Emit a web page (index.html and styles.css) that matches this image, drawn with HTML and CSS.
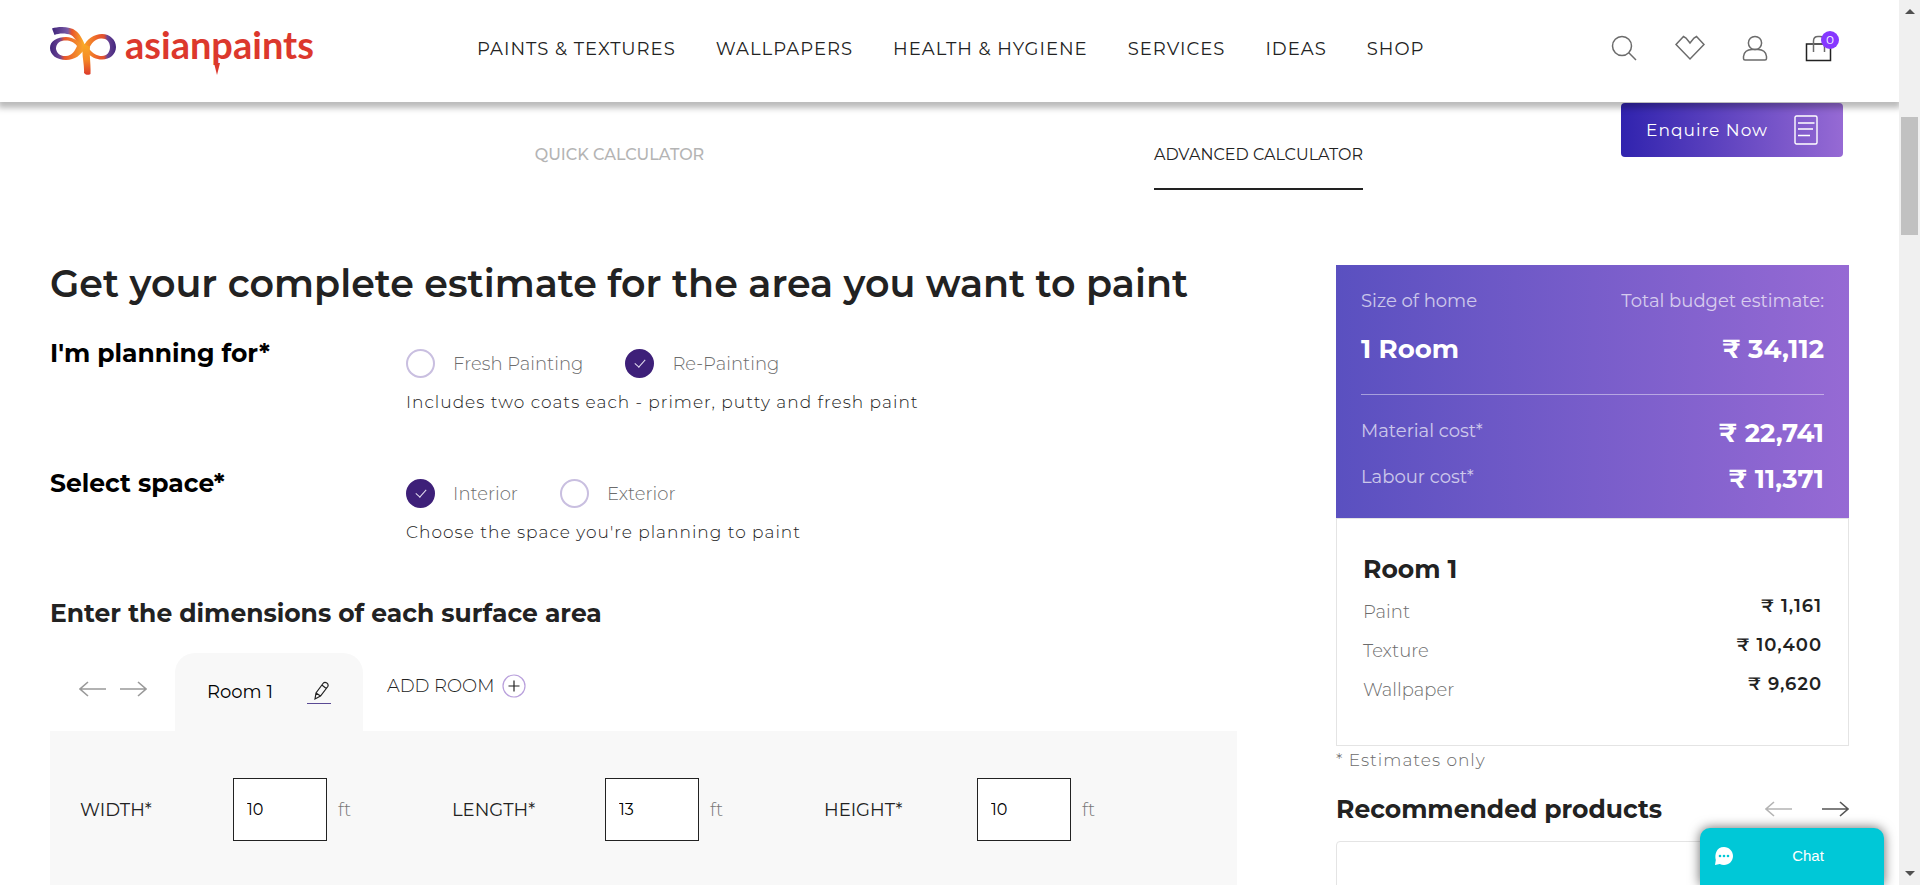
FILE: index.html
```
<!DOCTYPE html>
<html lang="en">
<head>
<meta charset="utf-8">
<title>Paint Budget Calculator - Asian Paints</title>
<link rel="stylesheet" href="styles.css">
</head>
<body>
<div class="page">
  <header class="header">
    <a class="logo" href="#">
      <svg class="logo-mark" viewBox="0 0 66 48" width="66" height="48" fill="none" aria-hidden="true">
        <defs>
          <linearGradient id="loopLeft" gradientUnits="userSpaceOnUse" x1="0" y1="0" x2="36" y2="0"><stop offset="0" stop-color="#43267d"/><stop offset=".28" stop-color="#6a4494"/><stop offset=".4" stop-color="#e8552b"/><stop offset="1" stop-color="#fbb02a"/></linearGradient>
          <linearGradient id="loopRight" gradientUnits="userSpaceOnUse" x1="32" y1="0" x2="66" y2="0"><stop offset="0" stop-color="#fba928"/><stop offset=".5" stop-color="#ea5a2b"/><stop offset=".65" stop-color="#e05030"/><stop offset=".75" stop-color="#6a4494"/><stop offset="1" stop-color="#43267d"/></linearGradient>
          <linearGradient id="stem" x1="0" y1="0" x2="0" y2="1"><stop offset="0" stop-color="#f9a825"/><stop offset=".5" stop-color="#f58a26"/><stop offset="1" stop-color="#dc3a2c"/></linearGradient>
          <linearGradient id="topArc" gradientUnits="userSpaceOnUse" x1="2" y1="0" x2="34" y2="0"><stop offset="0" stop-color="#3f247a"/><stop offset=".5" stop-color="#7a5aa6"/><stop offset=".62" stop-color="#e8552b"/><stop offset="1" stop-color="#fbb02a"/></linearGradient>
        </defs>
        <path d="M2 1.500C8-.5 20-1 26 4C31 8 33 14 36 20L32 25C28 18 26 11 21 8C16 6 9 6 4.500 8Z" fill="url(#topArc)"/>
        <path fill-rule="evenodd" d="M0 21C0 14 7 10 16 10C24 10 30 15 35 21C31 28 25 33 16 33C7 33 0 28 0 21ZM6 22C7 27 11 29.500 16 29C22 28.500 25 24 27 19C24 15 20 13.500 16 13.500C10 13.500 6 16 6 22Z" fill="url(#loopLeft)"/>
        <path fill-rule="evenodd" d="M33 20C37 12 44 7 52 7C60 7 66 13 66 20C66 27 60 32.500 52 32.500C46 32.500 41 30 36 25ZM39 22C43 26.500 47 29 52 29C57 29 60 25 60 20C60 14.500 56 11 51 11.500C45 12 41 16 39 22Z" fill="url(#loopRight)"/>
        <path d="M34 17L40 20C39 27 41 36 40.500 47C38 48.500 36 48 34 46C34.500 38 32 30 32.500 22Z" fill="url(#stem)"/>
      </svg>
      <span class="logo-text">asian<span class="drip">p</span>aints</span>
    </a>
    <nav class="nav" aria-label="Main">
      <a href="#">PAINTS &amp; TEXTURES</a>
      <a href="#">WALLPAPERS</a>
      <a href="#">HEALTH &amp; HYGIENE</a>
      <a href="#">SERVICES</a>
      <a href="#">IDEAS</a>
      <a href="#">SHOP</a>
    </nav>
    <div class="tools">
      <button class="icon-button" type="button" aria-label="Search">
        <svg viewBox="0 0 30 30" width="30" height="30"><circle cx="12" cy="12" r="9.5"/><path d="M18.8 18.8L26 26"/></svg>
      </button>
      <button class="icon-button" type="button" aria-label="Wishlist">
        <svg viewBox="0 0 30 30" width="30" height="30"><path d="M1 10.5L8.500 2.500L11 4L15 9L19 4L21.500 2.500L29 10.500L15 25Z"/></svg>
      </button>
      <button class="icon-button" type="button" aria-label="Account">
        <svg viewBox="0 0 30 30" width="30" height="30"><circle cx="15" cy="9" r="6.600"/><path d="M3.500 24.500V22.500Q4.500 15.600 12 15.600H18Q25.500 15.600 26.500 22.500V24.500Q26.500 26 25 26H5Q3.500 26 3.500 24.500Z"/></svg>
      </button>
      <button class="icon-button" type="button" aria-label="Cart">
        <svg viewBox="0 0 30 30" width="30" height="30"><path class="dark" d="M1.500 10H25.500V26.500H1.500Z"/><path d="M8.500 18V7Q8.500 2.500 13 2.500H15Q19.500 2.500 19.500 7V18"/></svg>
        <span class="badge">0</span>
      </button>
    </div>
  </header>

  <button class="enquire" type="button">
    <span>Enquire Now</span>
    <svg viewBox="0 0 24 30" width="24" height="30" fill="none" stroke="#fff" stroke-width="1.400"><rect x="1" y="1" width="22" height="28" rx="1.500"/><path d="M4 8H20.500M4 14H19M4 20.500H16"/></svg>
  </button>

  <div class="tabs" role="tablist">
    <div class="tab-cell"><button class="tab" type="button" role="tab" aria-selected="false">QUICK CALCULATOR</button></div>
    <div class="tab-cell"><button class="tab" type="button" role="tab" aria-selected="true">ADVANCED CALCULATOR</button></div>
  </div>

  <main class="content">
    <form class="estimate">
      <h1>Get your complete estimate for the area you want to paint</h1>

      <div class="question" role="radiogroup" aria-labelledby="plan-title">
        <h2 id="plan-title">I'm planning for*</h2>
        <div class="answer">
          <div class="choices">
            <label><input type="radio" name="plan">Fresh Painting</label>
            <label><input type="radio" name="plan" checked>Re-Painting</label>
          </div>
          <p>Includes two coats each - primer, putty and fresh paint</p>
        </div>
      </div>

      <div class="question" role="radiogroup" aria-labelledby="space-title">
        <h2 id="space-title">Select space*</h2>
        <div class="answer">
          <div class="choices">
            <label><input type="radio" name="space" checked>Interior</label>
            <label><input type="radio" name="space">Exterior</label>
          </div>
          <p>Choose the space you're planning to paint</p>
        </div>
      </div>

      <h2>Enter the dimensions of each surface area</h2>
      <div class="rooms">
        <div class="arrows room-arrows">
          <button type="button" aria-label="Previous room"><svg viewBox="0 0 28 16" width="28" height="16"><path d="M27 8H1M9 1L1 8L9 15"/></svg></button>
          <button type="button" aria-label="Next room"><svg viewBox="0 0 28 16" width="28" height="16"><path d="M1 8H27M19 1L27 8L19 15"/></svg></button>
        </div>
        <div class="room-tab">
          <span>Room 1</span>
          <button class="rename" type="button" aria-label="Rename room">
            <svg viewBox="0 0 24 22" width="24" height="22" fill="none" stroke="#222" stroke-width="1.200"><path d="M8 18L9 12L16 2.500Q17.500 .6 19.800 1.900Q21.800 3.500 20.800 5.500L13.500 15ZM14.800 4.100L19.300 7.500M9 12L13.500 15"/></svg>
          </button>
        </div>
        <button class="add-room" type="button">
          ADD ROOM
          <svg viewBox="0 0 24 24" width="24" height="24" fill="none"><circle cx="12" cy="12" r="11" stroke="#b9a0dc" stroke-width="1.200"/><path d="M6.500 12H17.500M12 6.500V17.500" stroke="#222" stroke-width="1.200"/></svg>
        </button>
      </div>
      <div class="dimensions">
        <div class="dimension"><label for="width">WIDTH*</label><input id="width" type="text" value="10"><span>ft</span></div>
        <div class="dimension"><label for="length">LENGTH*</label><input id="length" type="text" value="13"><span>ft</span></div>
        <div class="dimension"><label for="height">HEIGHT*</label><input id="height" type="text" value="10"><span>ft</span></div>
      </div>
    </form>

    <aside class="summary">
      <section class="totals">
        <div class="line"><span>Size of home</span><span>Total budget estimate:</span></div>
        <div class="line strong-line"><strong>1 Room</strong><strong>₹ 34,112</strong></div>
        <div class="costs">
          <div class="line"><span>Material cost*</span><strong>₹ 22,741</strong></div>
          <div class="line"><span>Labour cost*</span><strong>₹ 11,371</strong></div>
        </div>
      </section>
      <section class="breakdown">
        <h2>Room 1</h2>
        <div class="item"><span>Paint</span><strong>₹ 1,161</strong></div>
        <div class="item"><span>Texture</span><strong>₹ 10,400</strong></div>
        <div class="item"><span>Wallpaper</span><strong>₹ 9,620</strong></div>
      </section>
      <p class="note">* Estimates only</p>
      <div class="recommended">
        <h2>Recommended products</h2>
        <div class="arrows product-arrows">
          <button class="faded" type="button" aria-label="Previous product"><svg viewBox="0 0 28 16" width="28" height="16"><path d="M27 8H1M9 1L1 8L9 15"/></svg></button>
          <button class="active" type="button" aria-label="Next product"><svg viewBox="0 0 28 16" width="28" height="16"><path d="M1 8H27M19 1L27 8L19 15"/></svg></button>
        </div>
      </div>
      <div class="product"></div>
    </aside>
  </main>

  <button class="chat" type="button">
    <svg viewBox="0 0 20 20" width="20" height="20"><path d="M10 1C15 1 19 5 19 10S15 19 10 19C8.500 19 7 18.600 5.800 18L1 19L1.800 14C.5 9 2 1 10 1Z" fill="#fff"/><g fill="#00c8d7"><circle cx="6" cy="10" r="1.300"/><circle cx="10" cy="10" r="1.300"/><circle cx="14" cy="10" r="1.300"/></g></svg>
    <span>Chat</span>
  </button>
</div>
<div class="scrollbar" aria-hidden="true">
  <svg viewBox="0 0 10 5" width="10" height="5"><path d="M0 5L5 0L10 5Z" fill="#505050"/></svg>
  <div class="thumb"></div>
  <svg viewBox="0 0 10 5" width="10" height="5"><path d="M0 0L5 5L10 0Z" fill="#505050"/></svg>
</div>
</body>
</html>
```

FILE: styles.css
```
* { box-sizing: border-box; }
body {
  margin: 0;
  height: 100vh;
  overflow: hidden;
  display: flex;
  background: #fff;
  color: #222;
  font: 400 18px/24px Montserrat, Inter, sans-serif;
}
h1, h2, p { margin: 0; }
button { margin: 0; padding: 0; border: 0; background: none; color: inherit; font: inherit; cursor: pointer; }
a { color: inherit; text-decoration: none; }

.page { position: relative; flex: 1; min-width: 0; overflow: hidden; }

.header {
  position: relative;
  z-index: 2;
  display: flex;
  align-items: center;
  height: 102px;
  padding: 0 64px 4px 50px;
  background: #fff;
  box-shadow: 0 4px 6px 2px rgba(0, 0, 0, .27);
}
.logo { display: flex; align-items: flex-start; gap: 9px; width: 427px; padding-top: 3px; }
.logo-mark { flex: none; }
.logo-text { color: #dc382d; font: 700 38px/34px Lato, sans-serif; }
.drip { position: relative; }
.drip::after {
  content: "";
  position: absolute;
  left: 3px;
  bottom: -8px;
  border: solid transparent;
  border-width: 12px 3px 0;
  border-top-color: #dc382d;
}
.nav { display: flex; gap: 40px; letter-spacing: 1px; }
.tools { display: flex; gap: 35px; margin-left: auto; }
.icon-button { position: relative; width: 30px; height: 30px; }
.icon-button svg { display: block; fill: none; stroke: #6b6b6b; stroke-width: 1.5; }
.icon-button .dark { stroke: #222; }
.badge {
  position: absolute;
  top: -3px;
  right: -4px;
  width: 18px;
  height: 18px;
  border-radius: 50%;
  background: #8638ff;
  color: #fff;
  font-size: 12px;
  line-height: 18px;
}

.enquire {
  position: absolute;
  z-index: 1;
  top: 103px;
  right: 56px;
  display: flex;
  align-items: center;
  gap: 26px;
  padding: 12px 25px;
  border-radius: 4px;
  background: linear-gradient(90deg, #3023ae, #966ad4);
  color: #fff;
  font-size: 17px;
  letter-spacing: 1px;
}

.tabs { display: flex; padding: 40px 321px 0 300px; }
.tab-cell { flex: 1; text-align: center; }
.tab { padding-bottom: 21px; border-bottom: 2px solid transparent; color: #b4b4b4; font-size: 16px; font-weight: 500; }
.tab[aria-selected="true"] { border-color: #222; color: #222; font-weight: 400; }

.content {
  display: grid;
  grid-template-columns: minmax(0, 1187fr) minmax(0, 513fr);
  gap: 99px;
  padding: 70px 50px 0;
}
h1 { margin-bottom: 30px; font-size: 38px; line-height: 48px; font-weight: 600; white-space: nowrap; }
h2 { font-size: 25px; line-height: 30px; font-weight: 700; }
.question { display: flex; margin-bottom: 54px; }
.question h2 { width: 30%; color: #000; }
.answer { padding-top: 11px; }
.answer p { margin-top: 12px; font-size: 17px; font-weight: 300; letter-spacing: 1px; }
.choices { display: flex; gap: 42px; }
.choices label { display: flex; align-items: center; gap: 18px; color: #6c6c6c; font-weight: 300; }
.choices input {
  appearance: none;
  display: grid;
  place-items: center;
  width: 29px;
  height: 29px;
  margin: 0;
  border: 2px solid #c9bfe0;
  border-radius: 50%;
  background: #fff;
}
.choices input:checked { border-color: #3e2079; background: #3e2079; }
.choices input:checked::before {
  content: "";
  width: 5px;
  height: 9px;
  margin-bottom: 3px;
  border: solid #e4def0;
  border-width: 0 1px 1px 0;
  rotate: 42deg;
}

.rooms { display: flex; margin-top: 25px; padding-left: 29px; }
.arrows { display: flex; }
.arrows svg { display: block; fill: none; stroke: #999; stroke-width: 1.6; }
.arrows .active svg { stroke: #555; }
.arrows .faded svg { stroke: #b4b4b4; }
.room-arrows { gap: 12px; align-items: center; width: 96px; padding-bottom: 6px; }
.room-tab {
  display: flex;
  align-items: center;
  justify-content: space-between;
  width: 188px;
  height: 78px;
  padding: 0 32px;
  border-radius: 20px 20px 0 0;
  background: #f8f8f8;
  color: #000;
}
.rename { border-bottom: 1px solid #5a4a94; }
.rename svg { display: block; }
.add-room { display: flex; align-items: center; gap: 8px; margin-left: 24px; padding-bottom: 13px; font-weight: 300; }
.dimensions {
  display: grid;
  grid-template-columns: repeat(3, 1fr);
  min-height: 200px;
  padding: 47px 41px 0 30px;
  background: #f8f8f8;
}
.dimension { display: flex; align-items: center; align-self: start; }
.dimension label { width: 153px; }
.dimension input {
  width: 94px;
  height: 63px;
  padding: 0 13px;
  border: 1px solid #222;
  border-radius: 0;
  background: #fff;
  color: #000;
  font: 400 16px/24px Montserrat, Inter, sans-serif;
}
.dimension span { margin-left: 11px; color: #777; font-weight: 300; }

.summary { padding-top: 5px; }
.totals { padding: 24px 25px; background: linear-gradient(90deg, #5a50c0, #966ad4); color: #fff; }
.line { display: flex; justify-content: space-between; }
.line span { opacity: .68; }
.line strong { font-size: 26px; line-height: 28px; font-weight: 700; }
.strong-line { padding: 22px 0 31px; }
.costs { display: grid; gap: 18px; padding: 24px 0 1px; border-top: 1px solid rgba(255, 255, 255, .45); }
.breakdown { padding: 35px 26px 29px; border: 1px solid #e4e4e4; }
.breakdown h2 { margin-bottom: 15px; }
.item { display: flex; justify-content: space-between; margin-bottom: 12px; line-height: 27px; }
.item span { color: #6c6c6c; font-weight: 300; }
.item strong { font-weight: 600; line-height: 15px; letter-spacing: 1px; }
.note { margin-top: 2px; color: #6c6c6c; font-size: 17px; font-weight: 300; letter-spacing: 1px; }
.recommended { display: flex; justify-content: space-between; align-items: center; margin: 22px 0 17px; }
.product-arrows { gap: 28px; }
.product { height: 200px; border: 1px solid #e4e4e4; border-radius: 4px; }

.chat {
  position: absolute;
  z-index: 3;
  right: 15px;
  bottom: 0;
  display: flex;
  align-items: center;
  width: 184px;
  height: 57px;
  padding: 0 14px 2px;
  border-radius: 10px 10px 0 0;
  background: #00c8d7;
  box-shadow: 0 0 12px rgba(0, 0, 0, .6);
  color: #fff;
  font: 400 15px/20px "Liberation Sans", Arial, sans-serif;
}
.chat span { flex: 1; padding-left: 12px; }

.scrollbar {
  display: flex;
  flex-direction: column;
  align-items: center;
  width: 21px;
  padding: 9px 2px;
  background: #f0f0f0;
}
.thumb { width: 100%; height: 118px; margin: 103px 0 auto; background: #c1c1c1; }
```
